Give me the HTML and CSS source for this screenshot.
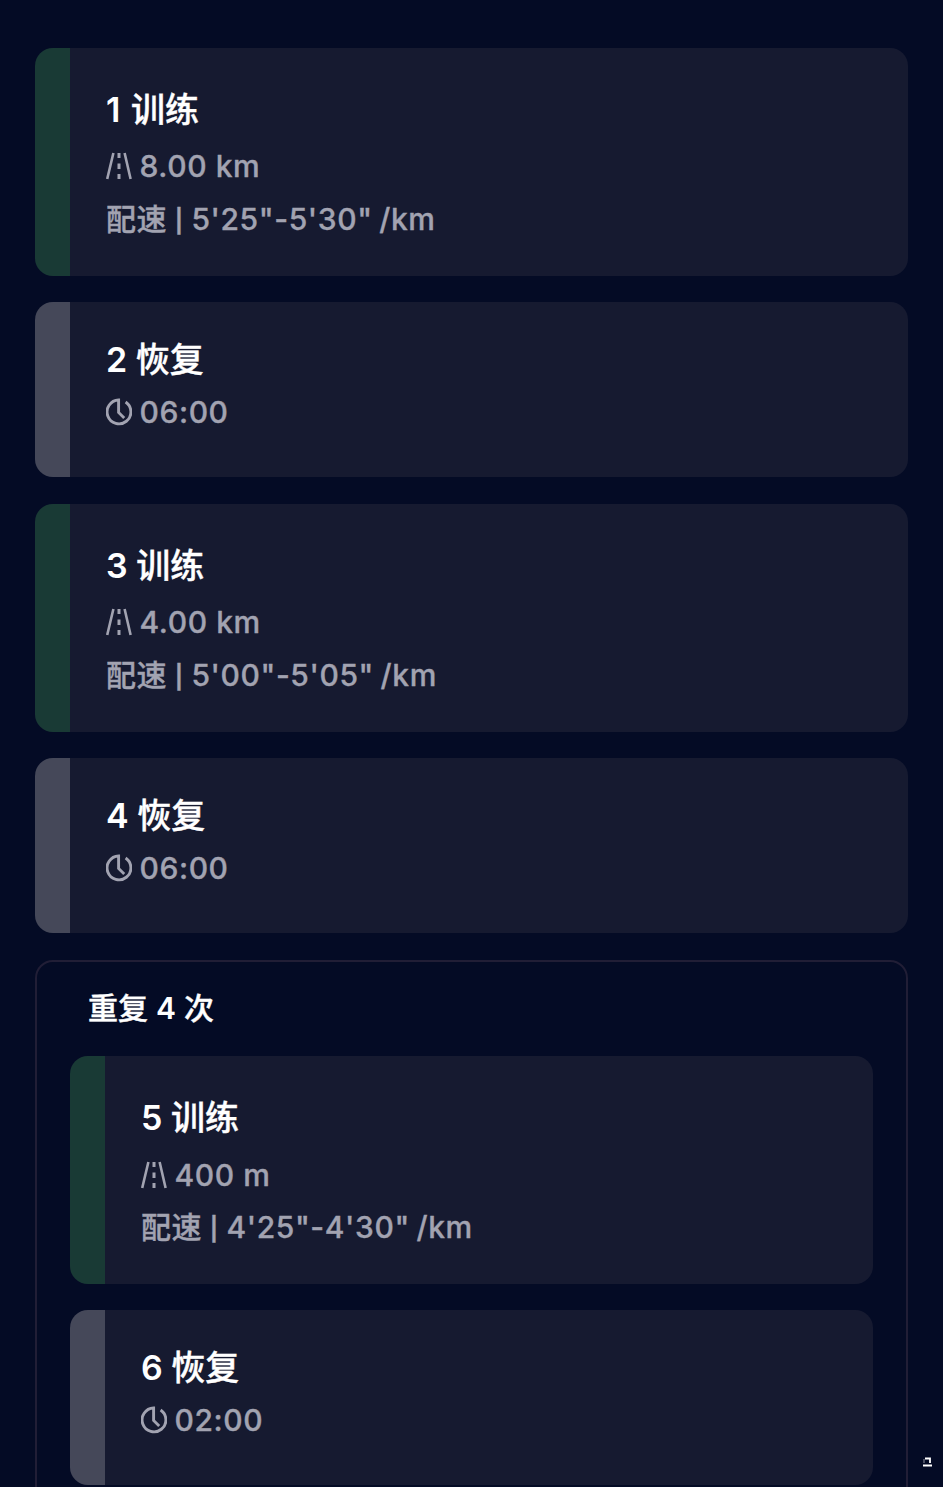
FILE: index.html
```
<!DOCTYPE html>
<html lang="zh-CN">
<head>
    <meta charset="UTF-8">
    <title>训练</title>
    <link rel="stylesheet" href="styles.css">
</head>
<body>
    <svg width="0" height="0" class="sprite">
        <symbol id="road" viewBox="0 0 26 28">
            <path d="M7.4 1 1.2 27M18.6 1l6 26" fill="none" stroke="currentColor" stroke-width="2.6"/>
            <path d="M13 1v5M13 11.5v5.5M13 22v5" fill="none" stroke="currentColor" stroke-width="3"/>
        </symbol>
        <symbol id="clock" viewBox="0 0 26 28">
            <path d="M19.6 4A11.9 11.9 0 1 1 12.6 2V14.5L18.2 20" fill="none" stroke="currentColor" stroke-width="2.9"/>
        </symbol>
    </svg>

    <div class="plan">
        <div class="card train">
            <div class="title first">1 <span class="zh">训练</span></div>
            <div class="detail"><svg class="icon"><use href="#road"/></svg>8.00 km</div>
            <div class="detail pace">配速 <span class="bar">|</span> 5'25"-5'30" /km</div>
        </div>
        <div class="card rest">
            <div class="title">2 <span class="zh">恢复</span></div>
            <div class="detail"><svg class="icon"><use href="#clock"/></svg>06:00</div>
        </div>
        <div class="card train">
            <div class="title">3 <span class="zh">训练</span></div>
            <div class="detail"><svg class="icon"><use href="#road"/></svg>4.00 km</div>
            <div class="detail pace">配速 <span class="bar">|</span> 5'00"-5'05" /km</div>
        </div>
        <div class="card rest">
            <div class="title">4 <span class="zh">恢复</span></div>
            <div class="detail"><svg class="icon"><use href="#clock"/></svg>06:00</div>
        </div>
        <div class="repeat">
            <div class="repeat-title"><span class="zh">重复</span> 4 <span class="zh">次</span></div>
            <div class="card train">
                <div class="title">5 <span class="zh">训练</span></div>
                <div class="detail"><svg class="icon"><use href="#road"/></svg>400 m</div>
                <div class="detail pace">配速 <span class="bar">|</span> 4'25"-4'30" /km</div>
            </div>
            <div class="card rest">
                <div class="title">6 <span class="zh">恢复</span></div>
                <div class="detail"><svg class="icon"><use href="#clock"/></svg>02:00</div>
            </div>
        </div>
    </div>

    <svg class="mark" viewBox="0 0 12 12">
        <path d="M3 3v4" stroke="#4b5063" stroke-width="2"/>
        <path d="M4 2.5h5V7M2 9.5h9" fill="none" stroke="currentColor" stroke-width="1.8"/>
    </svg>
</body>
</html>
```

FILE: styles.css
```
* {
    box-sizing: border-box;
}

body {
    margin: 0;
    height: 1487px;
    overflow: hidden;
    background: #040b25;
    color: #fff;
    font-family: Inter, "Noto Sans CJK SC", sans-serif;
    font-weight: 500;
}

.sprite {
    display: block;
}

.plan {
    display: flex;
    flex-direction: column;
    gap: 26.6px;
    padding: 48px 35px 0;
}

.card {
    border-radius: 18px;
    padding-left: 71px;
}

.train {
    height: 227.7px;
    padding-top: 40.2px;
    background: linear-gradient(to right, #193a35 35px, #161a30 35px);
}

.rest {
    height: 175px;
    padding-top: 35.7px;
    background: linear-gradient(to right, #454859 35px, #161a30 35px);
}

.title {
    height: 44px;
    line-height: 44px;
    font-size: 34px;
    font-weight: 600;
    margin-bottom: 8px;
}

.first {
    word-spacing: 2px;
}

/* medium weight for the Chinese part */
.zh {
    font-weight: 500;
    -webkit-text-stroke: 0.4px currentColor;
}

.rest .title {
    margin-bottom: 4px;
}

.detail {
    display: flex;
    align-items: center;
    height: 52.5px;
    line-height: 52px;
    font-size: 30px;
    letter-spacing: 0.6px;
    color: #a2a3b1;
    white-space: pre;
    -webkit-text-stroke: 0.35px currentColor;
}

.pace {
    word-spacing: -2px;
}

.bar {
    transform: translateY(2px) scaleY(0.77);
}

.icon {
    width: 26px;
    height: 28px;
    margin-left: -0.5px;
    margin-right: 8px;
    overflow: visible;
}

.repeat {
    display: flex;
    flex-direction: column;
    height: 580px;
    padding: 0 33px;
    border: 2px solid #211e36;
    border-radius: 18px;
}

.repeat-title {
    height: 94.5px;
    padding-left: 18px;
    line-height: 92.5px;
    font-size: 30px;
    font-weight: 600;
    word-spacing: 0.5px;
}

.repeat .card {
    flex: none;
}

.repeat .card + .card {
    margin-top: 26.5px;
}

.mark {
    position: absolute;
    left: 921px;
    top: 1456px;
    width: 12px;
    height: 12px;
}
```
